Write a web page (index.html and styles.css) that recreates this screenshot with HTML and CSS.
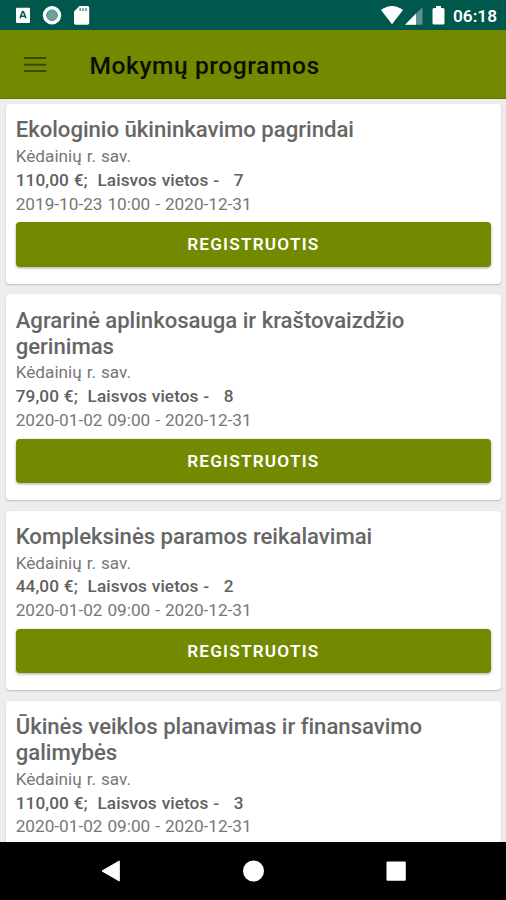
FILE: index.html
```html
<!DOCTYPE html>
<html lang="lt">
<head>
<meta charset="utf-8">
<title>Mokymų programos</title>
<link rel="stylesheet" href="styles.css">
</head>
<body>
<div class="screen">
  <div class="status">
    <svg class="status-left" width="80" height="30" viewBox="0 0 80 30">
      <rect x="16" y="7.7" width="14" height="15.3" rx="1" fill="#fff"/>
      <path d="M20 18.300l2.400-6.500h1.100l2.400 6.500M21 16.300h3.800" fill="none" stroke="#00574b" stroke-width="1.500"/>
      <circle cx="52" cy="15.200" r="9.200" fill="#fff"/>
      <circle cx="52" cy="15.200" r="5.300" fill="#68a299" stroke="#4a8c82" stroke-width="1"/>
    </svg>
    <svg class="status-sd" width="18" height="30" viewBox="0 0 18 30">
      <path d="M6.500 6H14.500a1.700 1.700 0 0 1 1.700 1.700V23a1.700 1.700 0 0 1-1.700 1.700H2.800A1.700 1.700 0 0 1 1 23V11.500z" fill="#fff"/>
      <path d="M7.200 8.300v2.800M10.100 8.300v2.800M13 8.300v2.800" stroke="#4a8c82" stroke-width="1.500"/>
    </svg>
    <svg class="status-right" width="68" height="30" viewBox="0 0 68 30">
      <path d="M0 10Q11 1.800 22 10L11 24.300z" fill="#fff"/>
      <path d="M41.500 7V24.700H24z" fill="#5c938b"/>
      <path d="M35 13.600V24.700H24z" fill="#fff"/>
      <path d="M55 6h5v2h2a1.500 1.500 0 0 1 1.500 1.500V23a1.500 1.500 0 0 1-1.500 1.500h-9a1.500 1.500 0 0 1-1.500-1.500V9.500A1.500 1.500 0 0 1 53 8h2z" fill="#fff"/>
    </svg>
    <span class="clock">06:18</span>
  </div>
  <header class="appbar">
    <svg class="menu" width="24" height="18" viewBox="0 0 24 18">
      <path d="M1 3H23.200M1 9.700H23.200M1 16H23.200" stroke="#3b4800" stroke-width="2"/>
    </svg>
    <h1 class="heading">Mokymų programos</h1>
  </header>
  <main class="list">
    <article class="card">
      <h2 class="title">Ekologinio ūkininkavimo pagrindai</h2>
      <p class="line">Kėdainių r. sav.</p>
      <p class="line price">110,00 €;  Laisvos vietos -   7</p>
      <p class="line">2019-10-23 10:00 - 2020-12-31</p>
      <button class="register">REGISTRUOTIS</button>
    </article>
    <article class="card">
      <h2 class="title">Agrarinė aplinkosauga ir kraštovaizdžio gerinimas</h2>
      <p class="line">Kėdainių r. sav.</p>
      <p class="line price">79,00 €;  Laisvos vietos -   8</p>
      <p class="line">2020-01-02 09:00 - 2020-12-31</p>
      <button class="register">REGISTRUOTIS</button>
    </article>
    <article class="card">
      <h2 class="title">Kompleksinės paramos reikalavimai</h2>
      <p class="line">Kėdainių r. sav.</p>
      <p class="line price">44,00 €;  Laisvos vietos -   2</p>
      <p class="line">2020-01-02 09:00 - 2020-12-31</p>
      <button class="register">REGISTRUOTIS</button>
    </article>
    <article class="card">
      <h2 class="title">Ūkinės veiklos planavimas ir finansavimo galimybės</h2>
      <p class="line">Kėdainių r. sav.</p>
      <p class="line price">110,00 €;  Laisvos vietos -   3</p>
      <p class="line">2020-01-02 09:00 - 2020-12-31</p>
    </article>
  </main>
  <nav class="navbar">
    <svg width="22" height="22" viewBox="0 0 22 22"><path d="M2 11L19.300 1V21z" fill="#fff" stroke="#fff" stroke-width="1" stroke-linejoin="round"/></svg>
    <svg width="22" height="22" viewBox="0 0 22 22"><circle cx="11.500" cy="11" r="10.500" fill="#fff"/></svg>
    <svg width="22" height="22" viewBox="0 0 22 22"><rect x="1.500" y="1.500" width="19.300" height="19.300" rx="1" fill="#fff"/></svg>
  </nav>
</div>
</body>
</html>
```
FILE: styles.css
```css
* { box-sizing: border-box; }
body { margin: 0; font-family: Roboto, sans-serif; }
h1, h2, p { margin: 0; }
.screen {
  width: 506px;
  height: 900px;
  display: flex;
  flex-direction: column;
  overflow: hidden;
  background: #efedec;
}
.status {
  flex: none;
  height: 30px;
  display: flex;
  background: #00574b;
}
.status-left { margin-right: -7px; }
.status-right { margin-left: auto; }
.clock {
  width: 57px;
  padding-left: 4px;
  font-size: 17.200px;
  font-weight: 600;
  line-height: 32px;
  color: #fff;
}
.appbar {
  flex: none;
  height: 69px;
  display: flex;
  align-items: center;
  padding-left: 23px;
  background: #738a00;
  border-bottom: 1px solid #5c7800;
}
.menu { margin-right: 42.500px; }
.heading {
  font-size: 24.600px;
  line-height: 30px;
  font-weight: 500;
  letter-spacing: 0.560px;
  color: #0b0e00;
  padding-top: 3px;
}
.list {
  flex: 1;
  min-height: 0;
  overflow: hidden;
  display: flex;
  flex-direction: column;
  gap: 10.500px;
  padding: 5px 5px 0 6px;
}
.card {
  flex: none;
  padding: 13.400px 10px 17px 9.700px;
  background: #fff;
  border-radius: 4px;
  box-shadow: 0 1px 2px rgba(0, 0, 0, 0.22);
}
.title {
  font-size: 22.150px;
  line-height: 25.800px;
  font-weight: 500;
  letter-spacing: -0.020px;
  color: #666;
  padding-bottom: 1.900px;
}
.line {
  font-size: 17.200px;
  line-height: 23.800px;
  word-spacing: 0.700px;
  color: #777;
  white-space: pre;
}
.price {
  font-weight: 500;
  letter-spacing: 0.080px;
  word-spacing: 0.500px;
  color: #606060;
}
.register {
  display: block;
  width: 100%;
  height: 44.500px;
  margin-top: 5.900px;
  padding: 0;
  border: 0;
  border-radius: 4px;
  background: #738a00;
  box-shadow: 0 1px 3px rgba(0, 0, 0, 0.35);
  font-family: inherit;
  font-size: 17.200px;
  font-weight: 600;
  letter-spacing: 1.200px;
  line-height: 45px;
  color: #fff;
}
.navbar {
  flex: none;
  height: 58px;
  display: flex;
  justify-content: center;
  align-items: center;
  gap: 120.500px;
  background: #000;
}
```
